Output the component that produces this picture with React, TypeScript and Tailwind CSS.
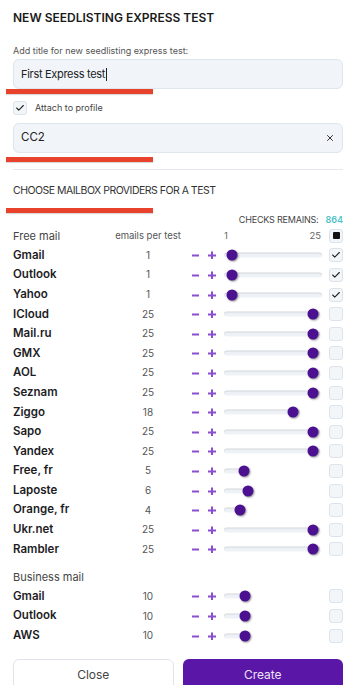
import { Check, X } from 'lucide-react';

type Row = { name: string; n: number; track: number; thumb: number; checked?: boolean };

const free: Row[] = [
  { name: 'Gmail', n: 1, track: 98, thumb: 8, checked: true },
  { name: 'Outlook', n: 1, track: 98, thumb: 8, checked: true },
  { name: 'Yahoo', n: 1, track: 98, thumb: 8, checked: true },
  { name: 'ICloud', n: 25, track: 96, thumb: 89 },
  { name: 'Mail.ru', n: 25, track: 96, thumb: 89 },
  { name: 'GMX', n: 25, track: 96, thumb: 89 },
  { name: 'AOL', n: 25, track: 96, thumb: 89 },
  { name: 'Seznam', n: 25, track: 96, thumb: 89 },
  { name: 'Ziggo', n: 18, track: 76, thumb: 69 },
  { name: 'Sapo', n: 25, track: 96, thumb: 89 },
  { name: 'Yandex', n: 25, track: 96, thumb: 89 },
  { name: 'Free, fr', n: 5, track: 25, thumb: 20 },
  { name: 'Laposte', n: 6, track: 29, thumb: 24 },
  { name: 'Orange, fr', n: 4, track: 21, thumb: 16 },
  { name: 'Ukr.net', n: 25, track: 96, thumb: 89 },
  { name: 'Rambler', n: 25, track: 96, thumb: 89 },
];

const business: Row[] = [
  { name: 'Gmail', n: 10, track: 26, thumb: 21 },
  { name: 'Outlook', n: 10, track: 26, thumb: 21 },
  { name: 'AWS', n: 10, track: 26, thumb: 21 },
];

const grid = 'grid h-[19.6px] grid-cols-[115px_40px_56px_98px_1fr] items-center';

function Box({ state }: { state?: 'checked' | 'mixed' }) {
  return (
    <span className="grid h-[14px] w-[14px] place-items-center rounded-[3px] border border-[#dde3ea] bg-[#f3f6f9]">
      {state === 'checked' && <Check size={10} strokeWidth={2.6} className="text-[#222]" />}
      {state === 'mixed' && <span className="h-[7px] w-[7px] rounded-[1px] bg-[#111]" />}
    </span>
  );
}

function Stepper() {
  return (
    <div className="flex items-center justify-end gap-[9px] pr-[8px] text-[#8a4fcf]">
      <svg width="7" height="8" viewBox="0 0 7 8" aria-hidden>
        <path d="M0 4.5h7" stroke="currentColor" strokeWidth="2" />
      </svg>
      <svg width="8" height="8" viewBox="0 0 8 8" aria-hidden>
        <path d="M0 4.5h8M4 0.5v8" stroke="currentColor" strokeWidth="2" />
      </svg>
    </div>
  );
}

function ProviderRow({ r }: { r: Row }) {
  return (
    <div className={grid}>
      <span className="text-[11.5px] font-semibold text-[#1d1d1f]">{r.name}</span>
      <span className="text-center text-[10px] text-[#555]">{r.n}</span>
      <Stepper />
      <div className="relative h-full">
        <div
          className="absolute left-0 top-1/2 h-[5px] -translate-y-1/2 rounded-full bg-[#eef2f6] shadow-[inset_0_1px_1px_rgba(0,0,0,0.12)]"
          style={{ width: r.track }}
        />
        <div
          className="absolute top-1/2 h-[11px] w-[11px] -translate-x-1/2 -translate-y-1/2 rounded-full bg-[#4b1190] shadow-[1px_1px_2px_rgba(0,0,0,0.4)]"
          style={{ left: r.thumb }}
        />
      </div>
      <div className="flex justify-end">
        <Box state={r.checked ? 'checked' : undefined} />
      </div>
    </div>
  );
}

function RedBar() {
  return <div className="-ml-[7px] h-[5px] w-[147px] bg-[#e8412c] shadow-[0_1px_1px_rgba(0,0,0,0.15)]" />;
}

export default function App() {
  return (
    <div
      className="h-[685px] w-[350px] overflow-hidden bg-white pl-[13px] pr-[7px] pt-[10px]"
      style={{ fontFamily: 'Inter, "Liberation Sans", sans-serif' }}
    >
      <h1 className="h-[16px] text-[12px] font-semibold leading-[16px] text-[#1a1a1a]">NEW SEEDLISTING EXPRESS TEST</h1>

      <p className="mt-[18px] h-[14px] text-[9px] leading-[14px] text-[#555]">Add title for new seedlisting express test:</p>
      <div className="mt-[1px] flex h-[30px] items-center rounded-[6px] border border-[#dfe5ec] bg-[#f1f5f9] px-[7px] text-[11px] tracking-[-0.3px] text-[#222]">
        First Express test<span className="ml-[1px] h-[13px] w-px bg-[#222]" />
      </div>
      <RedBar />

      <div className="mt-[7px] flex items-center gap-[8px]">
        <Box state="checked" />
        <span className="text-[9px] text-[#444]">Attach to profile</span>
      </div>

      <div className="mt-[8px] flex h-[30px] items-center justify-between rounded-[6px] border border-[#dfe5ec] bg-[#f1f5f9] pl-[7px] pr-[7px] text-[11.5px] text-[#222]">
        <span>CC2</span>
        <X size={10} strokeWidth={2.4} className="text-[#333]" />
      </div>
      <div className="mt-[4px]">
        <RedBar />
      </div>

      <div className="mt-[7px] h-px bg-[#e5e8ec]" />

      <h2 className="mt-[14px] h-[14px] text-[10.5px] leading-[14px] tracking-[-0.5px] text-[#333]">
        CHOOSE MAILBOX PROVIDERS FOR A TEST
      </h2>
      <div className="mt-[10px]">
        <RedBar />
      </div>

      <div className="mt-[1px] flex h-[12px] items-center justify-end gap-[7px] text-[9px] leading-[12px]">
        <span className="tracking-[-0.2px] text-[#444]">CHECKS REMAINS:</span>
        <span className="font-semibold text-[#4fc3c8]">864</span>
      </div>

      <div className={grid}>
        <span className="text-[11px] text-[#444]">Free mail</span>
        <span className="flex justify-center whitespace-nowrap text-[9.5px] text-[#555]">emails per test</span>
        <span />
        <div className="flex justify-between pr-[1px] text-[9.5px] text-[#666]">
          <span>1</span>
          <span>25</span>
        </div>
        <div className="flex justify-end">
          <Box state="mixed" />
        </div>
      </div>
      {free.map((r) => (
        <ProviderRow key={'f' + r.name} r={r} />
      ))}

      <div className={grid + ' mt-[8px]'}>
        <span className="text-[11px] text-[#444]">Business mail</span>
      </div>
      {business.map((r) => (
        <ProviderRow key={'b' + r.name} r={r} />
      ))}

      <div className="mt-[14px] grid grid-cols-2 gap-[9px]">
        <button className="h-[32px] rounded-[6px] border border-[#e0e4ea] bg-white text-[12px] text-[#444]">Close</button>
        <button className="h-[32px] rounded-[6px] bg-[#5a17a7] text-[12px] text-[#ece4f7]">Create</button>
      </div>
    </div>
  );
}
